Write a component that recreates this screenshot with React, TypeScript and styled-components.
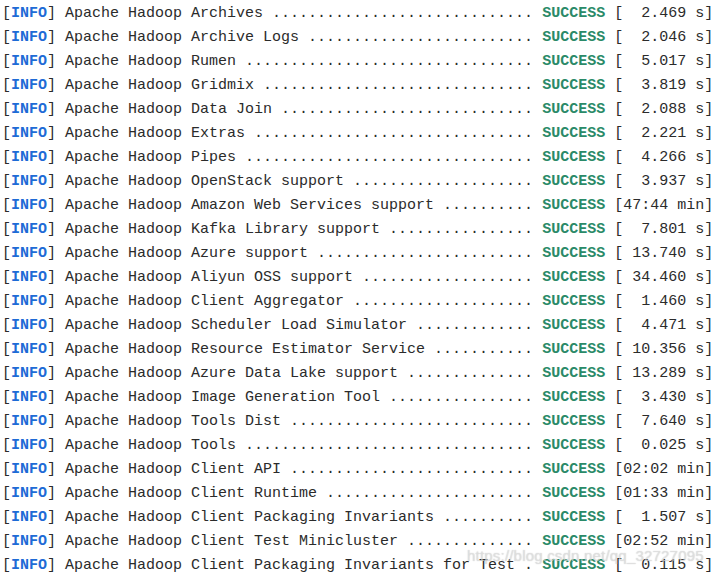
import React from 'react'
import styled, { createGlobalStyle } from 'styled-components';

interface LogItem {
    name: string;
    time: string;
};

const logItems: LogItem[] = [
    { name: 'Apache Hadoop Archives', time: '  2.469 s' },
    { name: 'Apache Hadoop Archive Logs', time: '  2.046 s' },
    { name: 'Apache Hadoop Rumen', time: '  5.017 s' },
    { name: 'Apache Hadoop Gridmix', time: '  3.819 s' },
    { name: 'Apache Hadoop Data Join', time: '  2.088 s' },
    { name: 'Apache Hadoop Extras', time: '  2.221 s' },
    { name: 'Apache Hadoop Pipes', time: '  4.266 s' },
    { name: 'Apache Hadoop OpenStack support', time: '  3.937 s' },
    { name: 'Apache Hadoop Amazon Web Services support', time: '47:44 min' },
    { name: 'Apache Hadoop Kafka Library support', time: '  7.801 s' },
    { name: 'Apache Hadoop Azure support', time: ' 13.740 s' },
    { name: 'Apache Hadoop Aliyun OSS support', time: ' 34.460 s' },
    { name: 'Apache Hadoop Client Aggregator', time: '  1.460 s' },
    { name: 'Apache Hadoop Scheduler Load Simulator', time: '  4.471 s' },
    { name: 'Apache Hadoop Resource Estimator Service', time: ' 10.356 s' },
    { name: 'Apache Hadoop Azure Data Lake support', time: ' 13.289 s' },
    { name: 'Apache Hadoop Image Generation Tool', time: '  3.430 s' },
    { name: 'Apache Hadoop Tools Dist', time: '  7.640 s' },
    { name: 'Apache Hadoop Tools', time: '  0.025 s' },
    { name: 'Apache Hadoop Client API', time: '02:02 min' },
    { name: 'Apache Hadoop Client Runtime', time: '01:33 min' },
    { name: 'Apache Hadoop Client Packaging Invariants', time: '  1.507 s' },
    { name: 'Apache Hadoop Client Test Minicluster', time: '02:52 min' },
    { name: 'Apache Hadoop Client Packaging Invariants for Test', time: '  0.115 s' },
];

// name + space + dots + space always fills 53 columns
const padName = (name: string) => {
    const dots = Math.max(1, 51 - name.length);
    return `${name} ${'.'.repeat(dots)} `;
};

const App: React.FC = () => {
    return (
        <>
            <GlobalStyle />
            <LogWrapper>
                {logItems.map((item) => {
                    return (
                        <LogLine key={item.name}>
                            [<InfoTag>INFO</InfoTag>] {padName(item.name)}
                            <SuccessTag>SUCCESS</SuccessTag> [{item.time}]
                        </LogLine>
                    )
                })}
                <Watermark>https://blog.csdn.net/qq_32727095</Watermark>
            </LogWrapper>
        </>
    )
};

const GlobalStyle = createGlobalStyle`
    body {
        margin: 0;
        background-color: #FFFFFF;
    }
`;

const LogWrapper = styled.div`
    position: relative;
    width: 721px;
    height: 576px;
    padding: 2px 0 0 2px;
    box-sizing: border-box;
    overflow: hidden;
    background-color: #FFFFFF;
`;

const LogLine = styled.div`
    font-family: "Liberation Mono", "DejaVu Sans Mono", monospace;
    font-size: 15px;
    line-height: 24px;
    height: 24px;
    color: #2B2B2B;
    white-space: pre;
`;

const InfoTag = styled.span`
    color: #1E6BD6;
    font-weight: 700;
`;

const SuccessTag = styled.span`
    color: #2A8A68;
    font-weight: 700;
`;

const Watermark = styled.div`
    position: absolute;
    left: 467px;
    top: 547px;
    font-family: "Liberation Sans", Arial, sans-serif;
    font-size: 15px;
    letter-spacing: 0.2px;
    color: rgba(235, 235, 235, 0.6);
    text-shadow: 0 0 1px rgba(120, 120, 120, 0.45);
    user-select: none;
    pointer-events: none;
`;

export default App;
